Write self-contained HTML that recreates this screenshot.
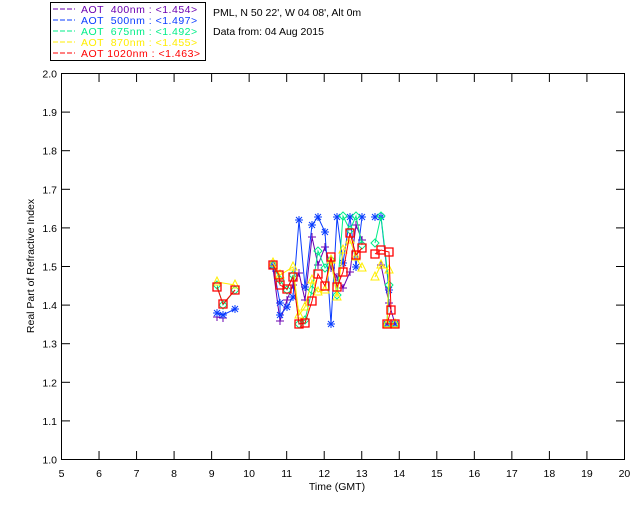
<!DOCTYPE html>
<html><head><style>
html,body{margin:0;padding:0;background:#fff;width:640px;height:512px;overflow:hidden}
svg{display:block}
text{font-family:"Liberation Sans",sans-serif;font-size:10.5px;white-space:pre}
</style></head><body>
<svg id="s" width="640" height="512" xmlns="http://www.w3.org/2000/svg">
<rect x="50.5" y="2.5" width="155" height="58" fill="none" stroke="#000"/>
<g font-size="10.5" letter-spacing="0.5">
<line x1="53" y1="9" x2="75" y2="9" stroke="#6a00b0" stroke-dasharray="5,2"/><text x="81" y="13" fill="#6a00b0" xml:space="preserve">AOT  400nm : &lt;1.454&gt;</text>
<line x1="53" y1="20" x2="75" y2="20" stroke="#0a3cff" stroke-dasharray="5,2"/><text x="81" y="24" fill="#0a3cff" xml:space="preserve">AOT  500nm : &lt;1.497&gt;</text>
<line x1="53" y1="31" x2="75" y2="31" stroke="#00ee88" stroke-dasharray="5,2"/><text x="81" y="35" fill="#00ee88" xml:space="preserve">AOT  675nm : &lt;1.492&gt;</text>
<line x1="53" y1="42" x2="75" y2="42" stroke="#ffee00" stroke-dasharray="5,2"/><text x="81" y="46" fill="#ffee00" xml:space="preserve">AOT  870nm : &lt;1.455&gt;</text>
<line x1="53" y1="53" x2="75" y2="53" stroke="#ff0000" stroke-dasharray="5,2"/><text x="81" y="57" fill="#ff0000" xml:space="preserve">AOT 1020nm : &lt;1.463&gt;</text>
</g>
<text x="213" y="16">PML, N 50 22', W 04 08', Alt 0m</text>
<text x="213" y="35">Data from: 04 Aug 2015</text>
<rect x="61.5" y="73.5" width="563" height="386" fill="none" stroke="#000"/>
<g id="ticks" stroke="#000"></g>
<g id="lab"></g>
<text x="337" y="490" text-anchor="middle">Time (GMT)</text>
<text transform="translate(34,266) rotate(-90)" text-anchor="middle">Real Part of Refractive Index</text>
<g id="data"></g>
</svg>
<script>
var NS="http://www.w3.org/2000/svg";
function el(p,t,a,txt){var e=document.createElementNS(NS,t);for(var k in a)e.setAttribute(k,a[k]);if(txt)e.textContent=txt;document.getElementById(p).appendChild(e);return e;}
for(var h=5;h<=20;h++){var x=61.5+(h-5)*37.53;
 if(h>5&&h<20){el("ticks","line",{x1:x,y1:459,x2:x,y2:451});el("ticks","line",{x1:x,y1:74,x2:x,y2:82});}
 el("lab","text",{x:x,y:477,"text-anchor":"middle"},String(h));}
for(var i=0;i<=10;i++){var y=459.5-i*38.6;
 if(i>0&&i<10){el("ticks","line",{x1:62,y1:y,x2:70,y2:y});el("ticks","line",{x1:624,y1:y,x2:616,y2:y});}
 el("lab","text",{x:57,y:y+4,"text-anchor":"end"},(1+i/10).toFixed(1));}
var S={
blue:[[217,313],[223,315],[235,309],null,[273,265],[280,303],[280,315],[287,307],[293,297],[299,220],[305,287],[312,225],[318,217],[325,232],[331,324],[337,217],[343,263],[350,217],[356,267],[362,217],null,[375,217],[381,217],[389,290],[387,324],[395,324]],
green:[[217,285],[223,305],[235,290],null,[273,265],[280,280],[287,290],[293,275],[299,324],[305,320],[312,290],[318,251],[325,268],[331,260],[337,295],[343,216],[350,230],[356,216],[362,245],null,[375,243],[381,216],[389,285],[387,324],[395,324]],
purple:[[217,317],[223,318],null,[273,268],[280,321],[287,300],[293,285],[299,273],[305,300],[312,237],[318,265],[325,247],[331,268],[337,277],[343,288],[350,272],[356,225],[362,240],null,[381,265],[389,303],[395,324]],
yellow:[[217,282],[235,285],null,[273,263],[280,275],[293,267],[299,315],[305,307],[312,280],[318,292],[325,290],[331,260],[337,297],[343,250],[350,240],[356,257],[362,268],null,[375,277],[381,265],[389,270],[387,324],[395,324]],
red:[[217,287],[223,304],[235,290],null,[273,265],[279,275],[280,285],[287,289],[293,277],[299,324],[305,323],[312,301],[318,274],[325,286],[331,257],[337,287],[343,272],[350,233],[356,255],[362,248],null,[375,254],[381,250],[389,252],[391,310],[387,324],[395,324]]};
var C={blue:"#0a3cff",green:"#00ee88",purple:"#6a00b0",yellow:"#ffee00",red:"#ff0000"};
["purple","blue","green","yellow","red"].forEach(function(k){
 var pts=S[k],d="",pen=false;
 pts.forEach(function(p){if(!p){pen=false;return;}d+=(pen?"L":"M")+p[0]+" "+p[1];pen=true;});
 el("data","path",{d:d,fill:"none",stroke:C[k],"stroke-width":1});
 pts.forEach(function(p){if(!p)return;var x=p[0],y=p[1],m;
  if(k=="blue")m="M"+(x-4)+" "+y+"h8M"+x+" "+(y-4)+"v8M"+(x-3)+" "+(y-3)+"l6 6M"+(x+3)+" "+(y-3)+"l-6 6";
  else if(k=="purple")m="M"+(x-4)+" "+y+"h8M"+x+" "+(y-4)+"v8";
  else if(k=="green")m="M"+x+" "+(y-4)+"l4 4l-4 4l-4 -4z";
  else if(k=="yellow")m="M"+x+" "+(y-5)+"l4 8h-8z";
  else m="M"+(x-4)+" "+(y-4)+"h8v8h-8z";
  el("data","path",{d:m,fill:"none",stroke:C[k],"stroke-width":k=="red"?1.3:1});});
});
</script>
</body></html>
